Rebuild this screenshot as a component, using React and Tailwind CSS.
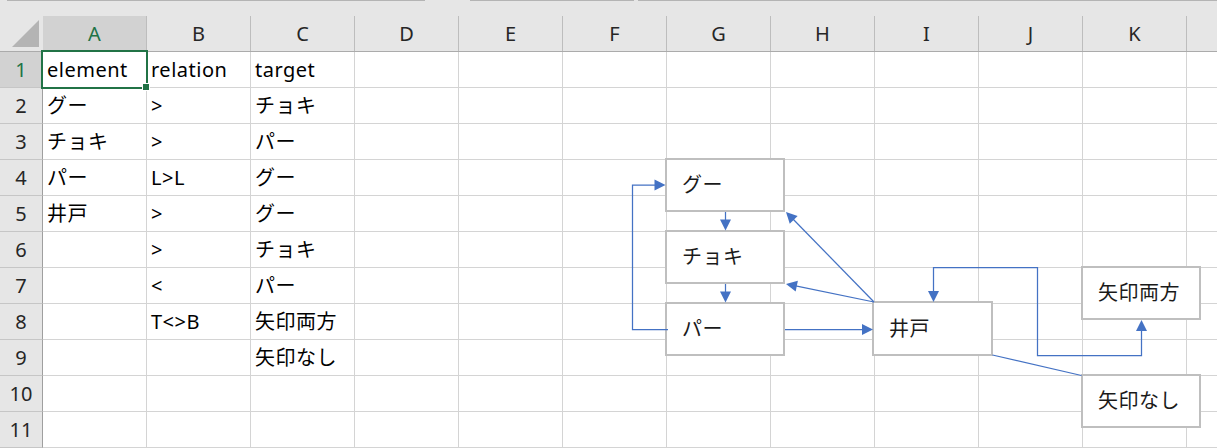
import React from "react";

const FONT = { fontFamily: "'Noto Sans', 'Noto Sans CJK JP', sans-serif" };

const COLS = ["A", "B", "C", "D", "E", "F", "G", "H", "I", "J", "K"];

const DATA = [
  ["element", "relation", "target"],
  ["グー", ">", "チョキ"],
  ["チョキ", ">", "パー"],
  ["パー", "L>L", "グー"],
  ["井戸", ">", "グー"],
  ["", ">", "チョキ"],
  ["", "<", "パー"],
  ["", "T<>B", "矢印両方"],
  ["", "", "矢印なし"],
  ["", "", ""],
  ["", "", ""],
];

function head(x1, y1, x2, y2, L = 11, W = 5.5) {
  const dx = x2 - x1;
  const dy = y2 - y1;
  const len = Math.hypot(dx, dy);
  const ux = dx / len;
  const uy = dy / len;
  const bx = x2 - ux * L;
  const by = y2 - uy * L;
  return `${x2},${y2} ${bx - uy * W},${by + ux * W} ${bx + uy * W},${by - ux * W}`;
}

function Box({ className, children }) {
  return (
    <div
      className={
        "absolute flex items-center bg-white border-2 border-[#bfbfbf] pl-[15px] text-[20px] tracking-[0.5px] text-[#1a1a1a] " +
        className
      }
    >
      {children}
    </div>
  );
}

export default function App() {
  const blue = "#4472c4";
  return (
    <div
      className="relative w-[1217px] h-[448px] overflow-hidden bg-white"
      style={FONT}
    >
      {/* top strip */}
      <div className="flex h-[16px] bg-[#e6e6e6]">
        <div className="w-[7px]" />
        <div className="w-[418px] border-t border-[#b4b4b4]" />
        <div className="w-[45px]" />
        <div className="w-[164px] border-t border-[#b4b4b4]" />
        <div className="w-[4px]" />
        <div className="flex-1 border-t border-[#b4b4b4]" />
      </div>

      {/* column header */}
      <div className="grid grid-cols-[43px_repeat(11,104px)_1fr] h-[36px] bg-[#e6e6e6] border-b border-[#ababab]">
        <div className="relative">
          <svg className="absolute left-0 top-0" width="43" height="35">
            <polygon points="12,31 39,4 39,31" fill="#b4b4b4" />
          </svg>
        </div>
        {COLS.map((c, i) => (
          <div
            key={c}
            className={
              i === 0
                ? "flex items-center justify-center bg-[#d2d2d2] border-r border-[#bdbdbd] text-[20px] text-[#217346]"
                : "flex items-center justify-center border-r border-[#bdbdbd] text-[20px] text-[#262626]"
            }
          >
            {c}
          </div>
        ))}
        <div />
      </div>

      {/* rows */}
      {DATA.map((row, r) => (
        <div
          key={r}
          className="grid grid-cols-[43px_repeat(11,104px)_1fr] h-[36px]"
        >
          <div
            className={
              r === 0
                ? "flex items-center justify-center bg-[#d2d2d2] border-r border-r-[#9f9f9f] border-b border-b-[#c6c6c6] text-[20px] text-[#217346]"
                : "flex items-center justify-center bg-[#e6e6e6] border-r border-r-[#9f9f9f] border-b border-b-[#c6c6c6] text-[20px] text-[#262626]"
            }
          >
            {r + 1}
          </div>
          {COLS.map((c, i) => (
            <div
              key={c}
              className="flex items-center pl-[4px] border-r border-b border-[#d4d4d4] text-[20px] tracking-[0.5px] text-black whitespace-nowrap"
            >
              {i < 3 ? row[i] : ""}
            </div>
          ))}
          <div className="border-b border-[#d4d4d4]" />
        </div>
      ))}

      {/* selected cell A1 */}
      <div className="absolute left-[41px] top-[50px] w-[107px] h-[39px] border-2 border-[#217346]" />
      <div className="absolute left-[142px] top-[83px] w-[8px] h-[8px] bg-white p-[1px]">
        <div className="w-full h-full bg-[#217346]" />
      </div>

      {/* diagram shapes */}
      <Box className="left-[665px] top-[158px] w-[120px] h-[54px]">グー</Box>
      <Box className="left-[665px] top-[230px] w-[120px] h-[54px]">チョキ</Box>
      <Box className="left-[665px] top-[302px] w-[120px] h-[54px]">パー</Box>
      <Box className="left-[872px] top-[301px] w-[121px] h-[55px]">井戸</Box>
      <Box className="left-[1081px] top-[266px] w-[120px] h-[54px]">矢印両方</Box>
      <Box className="left-[1081px] top-[374px] w-[120px] h-[54px]">矢印なし</Box>

      {/* connectors */}
      <svg
        className="absolute left-0 top-0 pointer-events-none"
        width="1217"
        height="448"
        viewBox="0 0 1217 448"
      >
        <g stroke={blue} strokeWidth="1.25" fill="none">
          <line x1="725.5" y1="212" x2="725.5" y2="226" />
          <line x1="725.5" y1="284" x2="725.5" y2="298" />
          <polyline points="668,329.5 632.5,329.5 632.5,185 656,185" />
          <line x1="785" y1="329.5" x2="864" y2="329.5" />
          <line x1="874" y1="302" x2="791" y2="217" />
          <line x1="874" y1="302" x2="792" y2="285.2" />
          <polyline points="933.5,294 933.5,267.5 1037.5,267.5 1037.5,355.5 1141.5,355.5 1141.5,328" />
          <line x1="992.5" y1="355" x2="1081.5" y2="375.5" />
        </g>
        <g fill={blue}>
          <polygon points={head(725.5, 212, 725.5, 230.5)} />
          <polygon points={head(725.5, 284, 725.5, 302.5)} />
          <polygon points={head(632.5, 185, 665.5, 185)} />
          <polygon points={head(785, 329.5, 873, 329.5)} />
          <polygon points={head(874, 302, 786, 212)} />
          <polygon points={head(874, 302, 786, 284)} />
          <polygon points={head(933.5, 267.5, 933.5, 302)} />
          <polygon points={head(1141.5, 355.5, 1141.5, 320)} />
        </g>
      </svg>
    </div>
  );
}
